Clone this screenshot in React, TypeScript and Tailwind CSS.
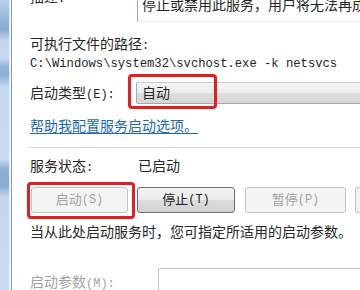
import React from 'react'

const cjk = "font-['Liberation_Sans','Noto_Sans_CJK_SC',sans-serif]"

// half-width latin like the old SimSun dialogs
function Lat({ children }: { children: React.ReactNode }) {
  return <span className="font-['Liberation_Mono',monospace] text-[12px]">{children}</span>
}

function WinButton({ label, hot, disabled, className }: { label: string; hot: string; disabled?: boolean; className?: string }) {
  return (
    <div
      className={
        'h-[26px] shrink-0 rounded-[3px] border flex items-center justify-center text-[13px] leading-[14px] ' +
        (disabled
          ? 'border-[#c2c6ca] bg-[#f4f4f4] text-[#a3a3a3] '
          : 'border-[#707070] bg-[linear-gradient(180deg,#f3f3f3_0%,#ebebeb_48%,#dcdcdc_52%,#d2d2d2_100%)] text-[#222] ') +
        (className ?? '')
      }
    >
      {label}
      <Lat>({hot})</Lat>
    </div>
  )
}

export default function App() {
  return (
    <div className={`w-[360px] h-[290px] overflow-hidden bg-white flex ${cjk} text-[14px] leading-[14px] text-[#262626]`}>
      {/* window frame */}
      <div className="w-[9px] shrink-0 bg-[linear-gradient(180deg,#b9d0ea_0%,#8fb0d8_8%,#8aaad4_10%,#c2d6ee_14%,#c6d9ef_20%,#94b3da_23%,#8eaed7_26%,#c4d8ee_30%,#c7daf0_55%,#90b0d8_58%,#8babd5_64%,#c3d7ee_68%,#c8dbf0_100%)]" />
      <div className="w-[2px] shrink-0 bg-[#e9f1f9]" />
      <div className="w-[1px] shrink-0 bg-[#8d9bab]" />

      <div className="w-[420px] shrink-0 pl-[18px]">
        {/* description */}
        <div className="flex mt-[-10px]">
          <div className="w-[107px] shrink-0">描述<Lat>:</Lat></div>
          <div className="flex-1 h-[32px] border-l border-l-[#a2a9b2] border-b border-b-[#ececec] pl-[4px] pt-[8px] whitespace-nowrap">
            停止或禁用此服务，用户将无法再成功使用
          </div>
        </div>

        <div className="mt-[15px]">可执行文件的路径<Lat>:</Lat></div>
        <div className="mt-[4px] font-['Liberation_Mono',monospace] text-[12.2px] leading-[14px] whitespace-nowrap">
          C:\Windows\system32\svchost.exe -k netsvcs
        </div>

        {/* startup type */}
        <div className="flex mt-[11px]">
          <div className="w-[106px] shrink-0 mt-[4px]">启动类型<Lat>(E):</Lat></div>
          <div className="relative flex-1 h-[22px] rounded-[2px] border border-[#a9a9a9] border-t-[#c9c9c9] bg-[linear-gradient(180deg,#f4f4f4_0%,#ececec_50%,#dedede_52%,#d6d6d6_100%)] pl-[5px] leading-[20px]">
            自动
            <div className="absolute left-[-9px] top-[-9px] w-[89px] h-[35px] rounded-[4px] border-[3px] border-[#e3201f]" />
          </div>
        </div>

        <div className="mt-[15px] text-[#2467b3] underline underline-offset-[2px] decoration-[#2467b3] w-fit">
          帮助我配置服务启动选项。
        </div>

        <div className="mt-[14px] ml-[-2px] h-[1px] bg-[#d9d9d9]" />

        {/* service status */}
        <div className="flex mt-[11px]">
          <div className="w-[108px] shrink-0">服务状态<Lat>:</Lat></div>
          <div>已启动</div>
        </div>

        <div className="flex mt-[12px]">
          <div className="relative ml-[1px]">
            <WinButton label="启动" hot="S" disabled className="w-[97px]" />
            <div className="absolute left-[-4px] top-[-5px] w-[108px] h-[37px] rounded-[4px] border-[3px] border-[#e3201f]" />
          </div>
          <WinButton label="停止" hot="T" className="w-[98px] ml-[9px]" />
          <WinButton label="暂停" hot="P" disabled className="w-[101px] ml-[10px]" />
          <WinButton label="恢复" hot="R" disabled className="w-[98px] ml-[9px]" />
        </div>

        <div className="mt-[12px] whitespace-nowrap">当从此处启动服务时，您可指定所适用的启动参数。</div>

        <div className="flex mt-[29px]">
          <div className="w-[128px] shrink-0 mt-[7px] text-[#a3a3a3]">启动参数<Lat>(M):</Lat></div>
          <div className="flex-1 h-[30px] border border-[#c6c6c6] bg-white" />
        </div>
      </div>
    </div>
  )
}
